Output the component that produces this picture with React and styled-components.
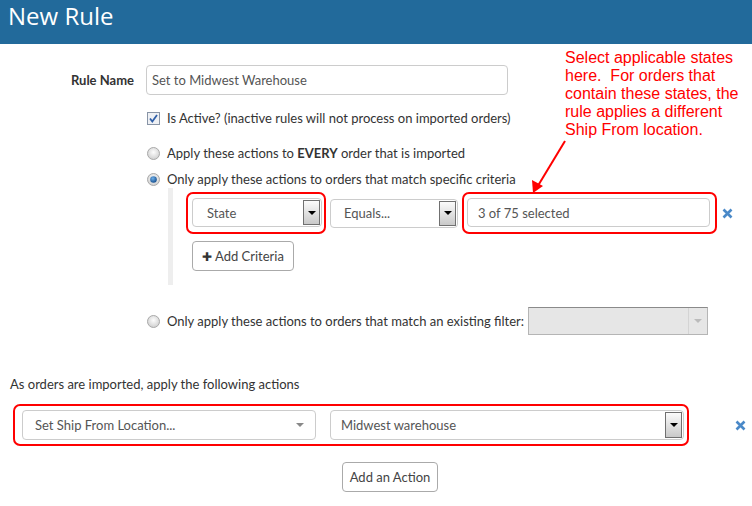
import React from 'react';
import styled, { createGlobalStyle } from 'styled-components';

const GlobalStyle = createGlobalStyle`
  body {
    margin: 0;
    background: #fff;
    font-family: Lato, "Open Sans", Arial, sans-serif;
    font-size: 13px;
    color: #333;
  }
`;

const App = () => {
  return (
    <Page>
      <GlobalStyle />
      <Header>New Rule</Header>
      <Form>
        <FieldRow>
          <Label>Rule Name</Label>
          <TextInput>Set to Midwest Warehouse</TextInput>
        </FieldRow>

        <Options>
          <OptionRow $mt={14}>
            <CheckBox />
            <span>Is Active? (inactive rules will not process on imported orders)</span>
          </OptionRow>
          <OptionRow $mt={17}>
            <Radio />
            <span>Apply these actions to <b>EVERY</b> order that is imported</span>
          </OptionRow>
          <OptionRow $mt={8}>
            <Radio checked />
            <span>Only apply these actions to orders that match specific criteria</span>
          </OptionRow>

          <Criteria>
            <CriteriaRow>
              <RedBox $pad="4px 2px 5px 4px">
                <Select $w={130} $pl={14}>
                  <SelectText>State</SelectText>
                  <WinButton />
                </Select>
              </RedBox>
              <Select $w={128} $pl={13}>
                <SelectText>Equals...</SelectText>
                <WinButton />
              </Select>
              <RedBox $pad="4px 5px 5px 3px">
                <Select $w={243} $pl={10}>
                  <SelectText>3 of 75 selected</SelectText>
                </Select>
              </RedBox>
              <RemoveIcon />
            </CriteriaRow>
            <Button $w={102} $ml={6}>
              <Plus>✚</Plus> Add Criteria
            </Button>
          </Criteria>

          <OptionRow $mt={22}>
            <Radio />
            <span>Only apply these actions to orders that match an existing filter:</span>
            <DisabledSelect>
              <Caret $light />
            </DisabledSelect>
          </OptionRow>
        </Options>

        <ActionsTitle>As orders are imported, apply the following actions</ActionsTitle>
        <ActionRow>
          <RedBox $pad="4px 3px 4px 7px" $gap={14}>
            <Select $w={294} $h={30} $pl={12}>
              <SelectText>Set Ship From Location...</SelectText>
              <Caret />
            </Select>
            <Select $w={354} $h={30} $pl={10}>
              <SelectText>Midwest warehouse</SelectText>
              <WinButton />
            </Select>
          </RedBox>
          <RemoveIcon $ml={46} />
        </ActionRow>
        <Button $w={96} $ml={342} $mt={16}>Add an Action</Button>
      </Form>

      <Note>
        Select applicable states<br />
        here.&nbsp; For orders that<br />
        contain these states, the<br />
        rule applies a different<br />
        Ship From location.
      </Note>
      <Arrow width="752" height="506">
        <line x1="565" y1="141" x2="536" y2="189" stroke="#f00" strokeWidth="2" />
        <polygon points="533,193 532,180 543,186" fill="#f00" />
      </Arrow>
    </Page>
  );
};

const CheckBox = () => (
  <Box13>
    <svg width="13" height="13" viewBox="0 0 13 13">
      <rect x="0.5" y="0.5" width="12" height="12" fill="#eef0f4" stroke="#8894a6" />
      <path d="M3 6.5 L5.3 9.5 L10 3" fill="none" stroke="#2f5fa8" strokeWidth="1.8" />
    </svg>
  </Box13>
);

const Radio = ({ checked }) => (
  <Box13>
    <svg width="13" height="13" viewBox="0 0 13 13">
      <defs>
        <radialGradient id="rg" cx="0.5" cy="0.4" r="0.6">
          <stop offset="0" stopColor="#fdfdfd" />
          <stop offset="1" stopColor="#cfcfcf" />
        </radialGradient>
        <radialGradient id="rb" cx="0.4" cy="0.35" r="0.7">
          <stop offset="0" stopColor="#6fb0ea" />
          <stop offset="1" stopColor="#114a8a" />
        </radialGradient>
      </defs>
      <circle cx="6.5" cy="6.5" r="6" fill="url(#rg)" stroke="#a9a9a9" />
      {checked && <circle cx="6.5" cy="6.5" r="3.3" fill="url(#rb)" />}
    </svg>
  </Box13>
);

const RemoveIcon = ({ $ml }) => (
  <XWrap $ml={$ml}>
    <svg width="11" height="11" viewBox="0 0 11 11">
      <path d="M1.5 1.5 L9.5 9.5 M9.5 1.5 L1.5 9.5" stroke="#4a89c8" strokeWidth="2.6" />
    </svg>
  </XWrap>
);

const Page = styled.div`
  position: relative;
  width: 752px;
  height: 506px;
  overflow: hidden;
`;

const Header = styled.div`
  height: 44px;
  background: #226a9b;
  color: #fff;
  font-family: "Open Sans", Lato, sans-serif;
  font-size: 24px;
  line-height: 32px;
  padding-left: 8px;
  box-sizing: border-box;
`;

const Form = styled.div`
  padding-top: 21px;
`;

const FieldRow = styled.div`
  display: flex;
  align-items: center;
`;

const Label = styled.div`
  width: 134px;
  padding-right: 12px;
  text-align: right;
  font-weight: bold;
  color: #333;
`;

const TextInput = styled.div`
  box-sizing: border-box;
  width: 362px;
  height: 30px;
  border: 1px solid #ccc;
  border-radius: 4px;
  padding-left: 5px;
  display: flex;
  align-items: center;
  color: #555;
`;

const Options = styled.div`
  padding-left: 147px;
`;

const OptionRow = styled.div`
  display: flex;
  align-items: center;
  gap: 7px;
  min-height: 18px;
  margin-top: ${(p) => p.$mt}px;
  color: #333;
`;

const Box13 = styled.span`
  display: inline-flex;
  width: 13px;
  height: 13px;
`;

const Criteria = styled.div`
  margin: 0 0 0 21px;
  border-left: 5px solid #eee;
  padding: 4px 0 14px 13px;
`;

const CriteriaRow = styled.div`
  display: flex;
  align-items: center;
  gap: 4px;
`;

const RedBox = styled.div`
  display: flex;
  align-items: center;
  gap: ${(p) => p.$gap || 0}px;
  border: 2px solid #f00;
  border-radius: 7px;
  padding: ${(p) => p.$pad};
`;

const Select = styled.div`
  box-sizing: border-box;
  display: flex;
  align-items: stretch;
  width: ${(p) => p.$w}px;
  height: ${(p) => p.$h || 29}px;
  border: 1px solid #ccc;
  border-radius: 4px;
  background: #fff;
  padding-left: ${(p) => p.$pl}px;
  color: #555;
`;

const SelectText = styled.span`
  flex: 1;
  display: flex;
  align-items: center;
`;

const WinButton = styled.span`
  width: 15px;
  margin: 1px;
  border: 1px solid #707070;
  background: linear-gradient(#fbfbfb, #c9c9c9);
  display: flex;
  align-items: center;
  justify-content: center;
  &::after {
    content: '';
    border-left: 4px solid transparent;
    border-right: 4px solid transparent;
    border-top: 4px solid #000;
  }
`;

const Caret = styled.span`
  width: 30px;
  display: flex;
  align-items: center;
  justify-content: center;
  &::after {
    content: '';
    border-left: 4px solid transparent;
    border-right: 4px solid transparent;
    border-top: 4px solid ${(p) => (p.$light ? '#bbb' : '#888')};
  }
`;

const DisabledSelect = styled.div`
  box-sizing: border-box;
  width: 180px;
  height: 28px;
  margin-left: -3px;
  border: 1px solid #b5b5b5;
  border-top-color: #8a8a8a;
  background: #e6e6e6;
  display: flex;
  justify-content: flex-end;
  align-items: stretch;
  & > span {
    width: 18px;
    border-left: 1px solid #d4d4d4;
  }
`;

const XWrap = styled.span`
  display: inline-flex;
  margin-left: ${(p) => (p.$ml !== undefined ? p.$ml : 1)}px;
`;

const Button = styled.div`
  box-sizing: border-box;
  width: ${(p) => p.$w}px;
  height: 30px;
  margin-top: ${(p) => (p.$mt !== undefined ? p.$mt : 7)}px;
  margin-left: ${(p) => p.$ml || 0}px;
  border: 1px solid #aaa;
  border-radius: 4px;
  background: #fff;
  display: flex;
  align-items: center;
  justify-content: center;
  gap: 3px;
  color: #444;
`;

const Plus = styled.span`
  font-size: 12px;
  color: #333;
`;

const ActionsTitle = styled.div`
  margin-top: 40px;
  padding-left: 10px;
  line-height: 18px;
  color: #333;
`;

const ActionRow = styled.div`
  display: flex;
  align-items: center;
  margin: 11px 0 0 13px;
`;

const Note = styled.div`
  position: absolute;
  left: 565px;
  top: 49px;
  color: #f00;
  font-family: "Liberation Sans", Arial, sans-serif;
  font-size: 16px;
  line-height: 18px;
`;

const Arrow = styled.svg`
  position: absolute;
  left: 0;
  top: 0;
  pointer-events: none;
`;

export default App;
